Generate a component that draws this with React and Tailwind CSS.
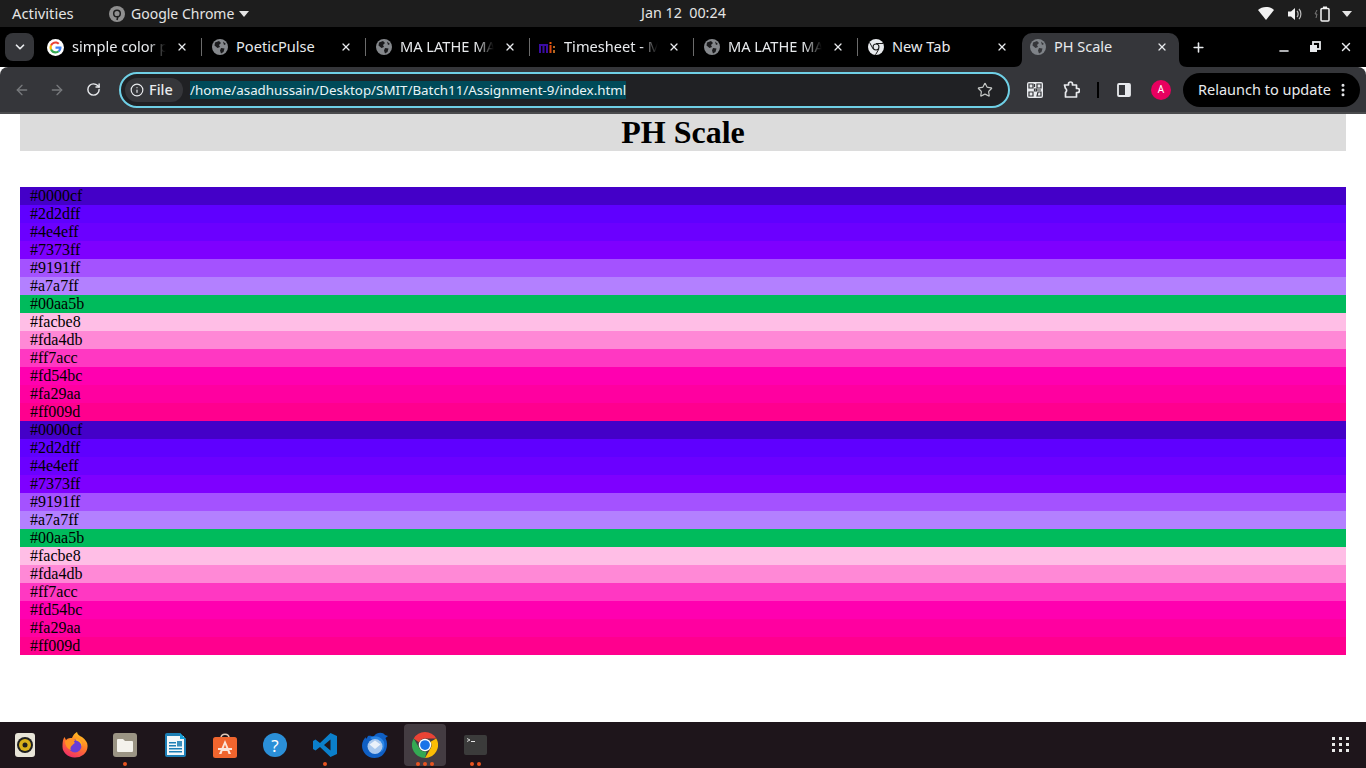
import React from "react";
import { ChevronDown, X, ArrowLeft, ArrowRight, RotateCw, Info, Star, Plus, Minus, EllipsisVertical } from "lucide-react";

const names = ["#0000cf","#2d2dff","#4e4eff","#7373ff","#9191ff","#a7a7ff","#00aa5b","#facbe8","#fda4db","#ff7acc","#fd54bc","#fa29aa","#ff009d"];
const shown = ["#4400c8","#5f00ff","#6b00ff","#7e00ff","#a452ff","#b380ff","#00bb5c","#ffbee6","#ff88d6","#ff38c2","#ff00b0","#ff00a0","#ff008e"];
const rows = [...names, ...names].map((n, i) => ({ n, c: shown[i % 13] }));

function Globe({ c = "#85888c", d = "#1a1a1c" }) {
  return (
    <svg width="16" height="16" viewBox="0 0 16 16" className="shrink-0">
      <circle cx="8" cy="8" r="8" fill={c} />
      <path d="M3 3.500 L7 2 L9 4 L7 6 L8 8 L5.500 9 L2.500 6.500 Z M9 9 L12.500 9.500 L11.500 13 L9 14.500 L8 11.500 Z M11 2.500 L14 5 L12 6 Z" fill={d} />
    </svg>
  );
}
function GoogleG() {
  return (
    <svg width="17" height="17" viewBox="0 0 48 48" className="shrink-0">
      <circle cx="24" cy="24" r="24" fill="#fff" />
      <path fill="#ea4335" d="M24 13c3 0 5.300 1 7.100 2.700l4.300-4.300C32.700 8.900 28.800 7 24 7 17.400 7 11.700 10.800 9 16.300l5 3.900C15.300 16 19.300 13 24 13z" />
      <path fill="#4285f4" d="M41 24.500c0-1.300-.1-2.300-.3-3.500H24v6.700h9.600c-.4 2.300-1.700 4.300-3.700 5.600l4.900 3.800C38 34.200 41 29.800 41 24.500z" />
      <path fill="#fbbc05" d="M14 28c-.4-1.200-.6-2.600-.6-4s.2-2.800.6-4l-5-3.800C7.700 18.600 7 21.200 7 24s.7 5.400 2 7.800l5-3.800z" />
      <path fill="#34a853" d="M24 41c4.600 0 8.400-1.500 11-4l-4.900-3.800c-1.500 1-3.500 1.700-6.100 1.700-4.700 0-8.700-3-10-7.200l-5 3.900C11.700 37.200 17.400 41 24 41z" />
    </svg>
  );
}
function ChromeMono({ size = 16 }) {
  return (
    <svg width={size} height={size} viewBox="0 0 16 16" className="shrink-0">
      <circle cx="8" cy="8" r="8" fill="#e8eaed" />
      <circle cx="8" cy="8" r="3.500" fill="#1a1a1a" />
      <circle cx="8" cy="8" r="2.400" fill="#e8eaed" />
      <path d="M8 4.500 L15 4.500 M5 9.800 L1.600 3.500 M10.900 10 L7.500 15.800" stroke="#1a1a1a" strokeWidth="1" />
    </svg>
  );
}
function MiLogo() {
  return (
    <svg width="17" height="11" viewBox="0 0 17 11" className="shrink-0">
      <path d="M0 2H9V11H7V4H5.500V11H3.500V4H2V11H0Z" fill="#3a0ca3" />
      <rect x="10.500" y="0" width="2" height="2" fill="#e8590c" />
      <rect x="10.500" y="3" width="2" height="8" fill="#d9480f" />
      <rect x="14" y="4" width="2" height="2" fill="#b5651d" />
      <rect x="14" y="8" width="2" height="3" fill="#b5651d" />
    </svg>
  );
}

function Tab({ icon, title, sep, active, fade }) {
  if (active) {
    return (
      <div className="relative flex h-[34px] w-[157px] shrink-0 items-center rounded-t-[10px] bg-[#35363a] pb-[6px] pl-[8px]">
        <svg width="8" height="8" viewBox="0 0 8 8" className="absolute -left-[8px] bottom-0"><path d="M8 0V8H0C5 8 8 5 8 0Z" fill="#35363a" /></svg>
        <svg width="8" height="8" viewBox="0 0 8 8" className="absolute -right-[8px] bottom-0"><path d="M0 0V8H8C3 8 0 5 0 0Z" fill="#35363a" /></svg>
        <div className="w-[16px] shrink-0">{icon}</div>
        <span className="ml-[8px] w-[100px] truncate text-[14.500px] text-[#e8eaed]">{title}</span>
        <X size={12} strokeWidth={2.5} className="ml-[2px] text-[#e8eaed]" />
      </div>
    );
  }
  return (
    <div className="relative flex h-[34px] w-[164px] shrink-0 items-center pb-[6px] pl-[9px]">
      <div className="flex w-[17px] shrink-0 justify-center">{icon}</div>
      <span className={`ml-[8px] w-[102px] overflow-hidden whitespace-nowrap text-[14.600px] text-[#e8eaed] ${fade ? "[mask-image:linear-gradient(to_right,#000_75%,transparent_92%)]" : ""}`}>{title}</span>
      <X size={12} strokeWidth={2.5} className="ml-[2px] shrink-0 text-[#e8eaed]" />
      {sep && <div className="absolute right-0 top-[5px] h-[18px] w-px bg-[#6b6b6b]" />}
    </div>
  );
}

function DockSlot({ children, dots = 0, active }) {
  return (
    <div className="relative flex h-[46px] w-[50px] items-center justify-center">
      {active && <div className="absolute left-[4px] top-[2px] h-[42px] w-[42px] rounded-[4px] bg-[#443c42]" />}
      <div className="relative flex items-center justify-center">{children}</div>
      {dots > 0 && (
        <div className="absolute bottom-[2px] left-0 right-0 flex justify-center gap-[3px]">
          {Array.from({ length: dots }).map((_, i) => (
            <span key={i} className="h-[4px] w-[4px] rounded-full bg-[#e95420]" />
          ))}
        </div>
      )}
    </div>
  );
}

export default function App() {
  return (
    <div className="flex h-[768px] w-[1366px] flex-col overflow-hidden bg-white font-['Noto_Sans',sans-serif]">
      {/* system bar */}
      <div className="relative flex h-[27px] shrink-0 items-center bg-[#1d1d1d] text-[14px] text-[#e4e4e4]">
        <span className="ml-[12px] w-[97px] text-[14.800px]">Activities</span>
        <svg width="16" height="16" viewBox="0 0 16 16" className="mr-[6px]">
          <circle cx="8" cy="8" r="8" fill="#8f8f8f" />
          <circle cx="8" cy="7.500" r="3.300" fill="none" stroke="#1d1d1d" strokeWidth="1.500" />
          <path d="M9 10 L8 14" stroke="#1d1d1d" strokeWidth="1.500" />
        </svg>
        <span className="text-[14px]">Google Chrome</span>
        <svg width="10" height="6" viewBox="0 0 10 6" className="ml-[5px]"><path d="M0 0H10L5 6Z" fill="#e4e4e4" /></svg>
        <span className="absolute left-[641px] top-[4px] whitespace-pre text-[14.300px] leading-[18px]">Jan 12  00:24</span>
        <div className="ml-auto flex items-center">
          <svg width="16" height="13" viewBox="0 0 16 13"><path d="M0 3C4-1 12-1 16 3L8 13Z" fill="#f2f2f2" /></svg>
          <svg width="16" height="16" viewBox="0 0 16 16" className="ml-[13px]">
            <path d="M1 5.500H4L8 2V14L4 10.500H1Z" fill="#f2f2f2" />
            <path d="M10 5C11.500 6.500 11.500 9.500 10 11M12 3C14.500 5.500 14.500 10.500 12 13" fill="none" stroke="#bdbdbd" strokeWidth="1.200" />
          </svg>
          <svg width="18" height="16" viewBox="0 0 18 16" className="ml-[11px]">
            <path d="M3 4L1 8H3L2 12" fill="none" stroke="#7a7a7a" strokeWidth="1" />
            <rect x="7" y="2.500" width="8" height="12.500" rx="1" fill="none" stroke="#f2f2f2" strokeWidth="1.500" />
            <rect x="9" y="0.500" width="4" height="2" fill="#f2f2f2" />
          </svg>
          <svg width="10" height="6" viewBox="0 0 10 6" className="ml-[10px] mr-[14px]"><path d="M0 0H10L5 6Z" fill="#e4e4e4" /></svg>
        </div>
      </div>

      {/* tab strip */}
      <div className="relative flex h-[40px] shrink-0 items-end bg-black">
        <div className="mb-[6px] ml-[5px] mr-[4px] flex h-[28px] w-[29px] items-center justify-center rounded-[8px] bg-[#35363a]">
          <ChevronDown size={14} strokeWidth={3} className="text-[#e8eaed]" />
        </div>
        <Tab icon={<GoogleG />} title="simple color picker" sep fade />
        <Tab icon={<Globe />} title="PoeticPulse" sep />
        <Tab icon={<Globe />} title="MA LATHE MACHINE" sep fade />
        <Tab icon={<MiLogo />} title="Timesheet - Mi" sep fade />
        <Tab icon={<Globe />} title="MA LATHE MACHINE" sep fade />
        <Tab icon={<ChromeMono />} title="New Tab" />
        <Tab icon={<Globe c="#7f8388" d="#35363a" />} title="PH Scale" active />
        <Plus size={15} strokeWidth={2.5} className="mb-[12px] ml-[12px] text-[#e8eaed]" />
        <div className="mb-[13px] ml-auto mr-[13px] flex items-center gap-[18px] text-[#e8eaed]">
          <Minus size={14} strokeWidth={2.500} className="translate-y-[4px]" />
          <svg width="12" height="12" viewBox="0 0 12 12">
            <rect x="4" y="1" width="7" height="7" fill="none" stroke="#e8eaed" strokeWidth="1.800" />
            <rect x="1" y="4" width="7" height="7" fill="#e8eaed" />
          </svg>
          <X size={14} strokeWidth={2.500} />
        </div>
      </div>

      {/* toolbar */}
      <div className="flex h-[47px] shrink-0 items-center rounded-t-[8px] border-b-2 border-[#4a4b4d] bg-[#35363a]">
        <ArrowLeft size={16} strokeWidth={2} className="ml-[14px] text-[#77797c]" />
        <ArrowRight size={16} strokeWidth={2} className="ml-[19px] text-[#77797c]" />
        <RotateCw size={15} strokeWidth={2.3} className="ml-[21px] text-[#e8eaed]" />
        <div className="ml-[18px] flex h-[36px] w-[891px] items-center rounded-full border-2 border-[#6fd0e6] bg-[#202124] pl-[4px] pr-[15px]">
          <div className="flex h-[24px] w-[58px] items-center rounded-full bg-[#35363a] pl-[5px] text-[14.500px] font-medium text-[#e8eaed]">
            <Info size={14} strokeWidth={2} className="mr-[5px] shrink-0" />
            File
          </div>
          <span className="ml-[7px] whitespace-nowrap bg-[#004a59] text-[13.350px] leading-[18px] text-[#e8f4f7]">/home/asadhussain/Desktop/SMIT/Batch11/Assignment-9/index.html</span>
          <Star size={16} strokeWidth={1.800} className="ml-auto text-[#c4c7c5]" />
        </div>
        <svg width="16" height="16" viewBox="0 0 16 16" className="ml-[17px]">
          <rect width="16" height="16" rx="2" fill="#e8eaed" />
          <path d="M2 2h4v4H2zM10 2h4v4h-4zM2 10h4v4H2z" fill="none" stroke="#35363a" strokeWidth="1.200" />
          <path d="M7.500 2v3M7.500 7h2v2h-2zM10 8h4M11 10h3v4h-4z" fill="none" stroke="#35363a" strokeWidth="1.200" />
        </svg>
        <svg width="18" height="18" viewBox="0 0 18 18" className="ml-[19px]">
          <path d="M2.500 4H6.500V3A2 2 0 0 1 10.500 3V4H14.500V7.500H15.500A2 2 0 0 1 15.500 11.500H14.500V16H3.500V11.500C5 10.500 5 8 3.500 7.500Z" fill="none" stroke="#e8eaed" strokeWidth="1.700" strokeLinejoin="round" />
        </svg>
        <div className="ml-[17px] h-[16px] w-[2px] bg-black" />
        <svg width="14" height="14" viewBox="0 0 14 14" className="ml-[18px]">
          <rect x="1" y="1" width="12" height="12" rx="1" fill="none" stroke="#e8eaed" strokeWidth="1.800" />
          <rect x="8" y="1" width="5" height="12" fill="#e8eaed" />
        </svg>
        <div className="ml-[20px] flex h-[20px] w-[20px] items-center justify-center rounded-full bg-[#e8005f] text-[10px] text-white">A</div>
        <div className="ml-[12px] flex h-[34px] w-[177px] items-center rounded-full bg-black pl-[15px] text-[14.500px] text-[#e8eaed]">
          <span className="whitespace-nowrap">Relaunch to update</span>
          <EllipsisVertical size={16} strokeWidth={2.500} className="ml-auto mr-[9px]" />
        </div>
      </div>

      {/* page */}
      <div className="min-h-0 flex-1 bg-white px-[20px] font-['Liberation_Serif',serif] text-[16px] leading-[18px] text-black">
        <h1 className="bg-[#dcdcdc] text-center text-[32px] font-bold leading-[37px]">PH Scale</h1>
        <div className="mt-[36px]">
          {rows.map((r, i) => (
            <div key={i} className="h-[18px] pl-[10px]" style={{ backgroundColor: r.c }}>{r.n}</div>
          ))}
        </div>
      </div>

      {/* dock */}
      <div className="flex h-[46px] shrink-0 items-center bg-[#1e151b]">
        <DockSlot>
          <svg width="20" height="24" viewBox="0 0 20 24">
            <rect width="20" height="24" rx="3" fill="#e8e4d8" />
            <circle cx="10" cy="12" r="8" fill="#1f1f1f" />
            <circle cx="10" cy="12" r="6" fill="#d9b11a" />
            <circle cx="10" cy="12" r="2.500" fill="#1f1f1f" />
          </svg>
        </DockSlot>
        <DockSlot>
          <svg width="26" height="26" viewBox="0 0 26 26">
            <defs>
              <linearGradient id="ff" x1="0.700" y1="0" x2="0.200" y2="1"><stop offset="0" stopColor="#ffc61e" /><stop offset=".45" stopColor="#ff7a2a" /><stop offset="1" stopColor="#f0266f" /></linearGradient>
            </defs>
            <path d="M15 0 C15.500 3 18 4 20 5 C24 8 26 11 25.500 15 A12.500 11 0 0 1 0.500 14 C0.500 10 1 7 2.500 5 L4 8 C6 6 8 6 10 6 C11 3 13 1 15 0Z" fill="url(#ff)" />
            <circle cx="13" cy="14" r="6.500" fill="#6a3ed6" />
            <path d="M3 9C6 7 11 7 14 8 C12 9 11 10 13 10.500 C11 13 7 15 9 18 C5 17 3 13 3 9Z" fill="#ff9424" />
            <path d="M14 7C18 7 21 11 20 15 C19 11 17 9 14 8.500Z" fill="#ffb21e" />
          </svg>
        </DockSlot>
        <DockSlot dots={1}>
          <svg width="24" height="24" viewBox="0 0 24 24">
            <rect width="24" height="24" rx="3" fill="#9b9484" />
            <path d="M4 7a1 1 0 0 1 1-1H10L12 8H19a1 1 0 0 1 1 1V18a1 1 0 0 1-1 1H5a1 1 0 0 1-1-1Z" fill="#f4f2ec" />
          </svg>
        </DockSlot>
        <DockSlot>
          <svg width="21" height="24" viewBox="0 0 21 24">
            <path d="M0 2a2 2 0 0 1 2-2H15L21 6V22a2 2 0 0 1-2 2H2a2 2 0 0 1-2-2Z" fill="#1c7fb6" />
            <rect x="2" y="3" width="17" height="19" fill="#f2f7fa" />
            <path d="M15 0L21 6H15Z" fill="#18a0d8" />
            <path d="M4 9H11V10.500H4ZM4 12H11V13.500H4ZM4 15H17V16.500H4ZM4 18H17V19.500H4Z" fill="#1c7fb6" />
            <rect x="12" y="8" width="5" height="5.500" fill="#3b8fbd" />
          </svg>
        </DockSlot>
        <DockSlot>
          <svg width="24" height="25" viewBox="0 0 24 25">
            <path d="M8 5C8 0 16 0 16 5" fill="none" stroke="#e0c8b8" strokeWidth="1.500" />
            <rect y="4" width="24" height="21" rx="2.500" fill="#f0652e" />
            <path d="M12 7L18 21H15.500L14.500 18H9.500L8.500 21H6ZM10.500 15.500H13.500L12 11.500Z" fill="#fbe6da" />
            <rect x="5" y="15" width="14" height="2" fill="#fbe6da" />
          </svg>
        </DockSlot>
        <DockSlot>
          <div className="flex h-[24px] w-[24px] items-center justify-center rounded-full bg-[#2b8fd8] text-[17px] leading-none text-white">?</div>
        </DockSlot>
        <DockSlot dots={1}>
          <svg width="24" height="24" viewBox="0 0 24 24">
            <path d="M17.500 0L24 3V21L17.500 24L7 14L2.500 17.500L0 16V8L2.500 6.500L7 10ZM17.500 6.500L11 12L17.500 17.500Z" fill="#0b7fcb" fillRule="evenodd" />
          </svg>
        </DockSlot>
        <DockSlot>
          <svg width="26" height="26" viewBox="0 0 26 26">
            <path d="M6 4C9 3 10 5 12 4C15 0 21 0 23 3L26 4L23.500 6C25.500 10 25.500 14 24 18C22 23 18 26 12.500 26C5 26 0 20 0 13.500C0 10 2 6.500 4 5C3.500 7 4 8 6 4Z" fill="#0f5fc4" />
            <path d="M8 6C13 3 20 5 22 10C23 14 22 18 19 20C21 15 19 9 13 8C11 7.500 9 7 8 6Z" fill="#2b86e6" />
            <circle cx="13" cy="14.500" r="7.500" fill="#a9c8ee" />
            <path d="M7.500 12.500L13 8.500L18.500 12.500L13 17Z" fill="#eaf1fa" />
          </svg>
        </DockSlot>
        <DockSlot dots={3} active>
          <svg width="26" height="26" viewBox="0 0 48 48">
            <path d="M24 0A24 24 0 0 1 44.800 12H24A12 12 0 0 0 13 19.500L3.200 12A24 24 0 0 1 24 0Z" fill="#ea4335" />
            <path d="M44.800 12A24 24 0 0 1 24 48L34.400 30A12 12 0 0 0 34.400 18Z" fill="#fbbc05" />
            <path d="M24 48A24 24 0 0 1 3.200 12L13.600 30A12 12 0 0 0 27 35.600Z" fill="#34a853" />
            <circle cx="24" cy="24" r="11.500" fill="#fff" />
            <circle cx="24" cy="24" r="9" fill="#1a73e8" />
          </svg>
        </DockSlot>
        <DockSlot dots={2}>
          <svg width="23" height="20" viewBox="0 0 23 20">
            <rect width="23" height="20" rx="2" fill="#3b3b3b" />
            <path d="M3 3.500L6 5L3 6.500" fill="none" stroke="#e5e5e5" strokeWidth="0.900" />
            <rect x="7" y="6" width="4" height="1" fill="#e5e5e5" />
          </svg>
        </DockSlot>
        <svg width="18" height="18" viewBox="0 0 18 18" className="ml-auto mr-[16px]" fill="#e8e8e8">
          <rect x="0" y="1" width="3" height="3" /><rect x="7" y="1" width="3" height="3" /><rect x="14" y="1" width="3" height="3" />
          <rect x="0" y="7" width="3" height="3" /><rect x="7" y="7" width="3" height="3" /><rect x="14" y="7" width="3" height="3" />
          <rect x="0" y="13" width="3" height="3" /><rect x="7" y="13" width="3" height="3" /><rect x="14" y="13" width="3" height="3" />
        </svg>
      </div>
    </div>
  );
}
